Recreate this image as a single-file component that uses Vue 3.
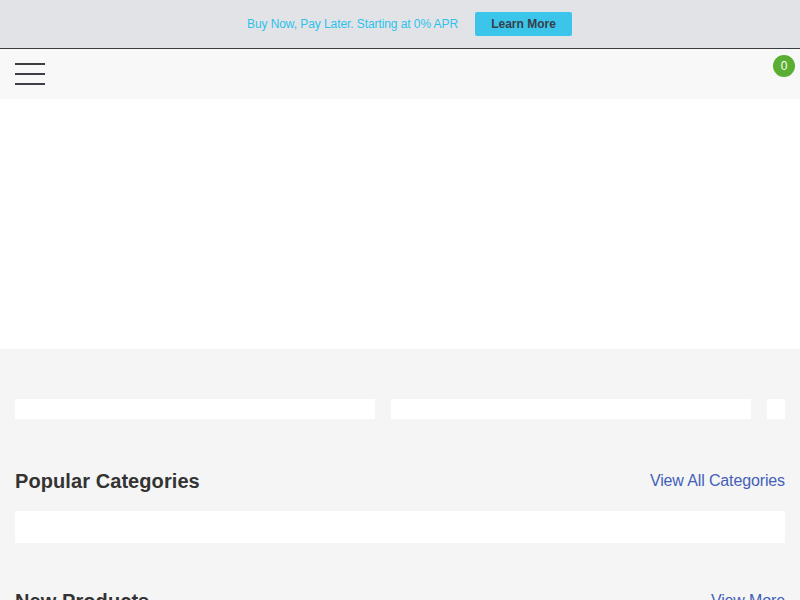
<script setup>
const slides = [
  { id: 1, cls: 'slide-full' },
  { id: 2, cls: 'slide-full' },
  { id: 3, cls: 'slide-peek' },
]
</script>

<template>
  <div class="page">
    <div class="promo">
      <span class="promo-text">Buy Now, Pay Later. Starting at 0% APR</span>
      <a class="promo-btn" href="#">Learn More</a>
    </div>
    <header class="nav">
      <button class="burger" aria-label="Menu">
        <span></span><span></span><span></span>
      </button>
      <span class="badge">0</span>
    </header>
    <div class="hero"></div>
    <main class="content">
      <div class="slides">
        <div v-for="s in slides" :key="s.id" :class="s.cls"></div>
      </div>
      <section class="head first">
        <h2>Popular Categories</h2>
        <a href="#" class="more">View All Categories</a>
      </section>
      <div class="strip"></div>
      <section class="head second">
        <h2>New Products</h2>
        <a href="#" class="more small">View More</a>
      </section>
    </main>
  </div>
</template>

<style>
html, body { margin: 0; background: #f4f4f4; }
</style>

<style scoped>
.page {
  height: 600px;
  overflow: hidden;
  font-family: "Liberation Sans", Arial, sans-serif;
  background: #f5f5f5;
}
.promo {
  height: 48px;
  border-bottom: 1px solid #3a3c42;
  background: #e2e3e7;
  display: flex;
  align-items: center;
  justify-content: center;
  gap: 17px;
  padding-left: 19px;
}
.promo-text {
  font-size: 12px;
  letter-spacing: -0.08px;
  color: #2cc2ea;
}
.promo-btn {
  width: 97px;
  height: 24px;
  display: flex;
  align-items: center;
  justify-content: center;
  background: #3bc5ea;
  border-radius: 2px;
  color: #36404b;
  font-size: 12px;
  font-weight: 700;
  text-decoration: none;
}
.nav {
  position: relative;
  height: 50px;
  background: #f8f8f8;
  display: flex;
  align-items: center;
  padding-left: 15px;
}
.burger {
  width: 30px;
  height: 22px;
  padding: 0;
  border: 0;
  background: none;
  display: flex;
  flex-direction: column;
  justify-content: space-between;
}
.burger span {
  display: block;
  height: 2px;
  background: #3d3f45;
}
.badge {
  position: absolute;
  top: 6px;
  right: 5px;
  width: 22px;
  height: 22px;
  border-radius: 50%;
  background: #5aae32;
  color: #fff;
  font-size: 12px;
  display: flex;
  align-items: center;
  justify-content: center;
}
.hero {
  height: 250px;
  background: #fff;
}
.content {
  padding: 50px 15px 0;
}
.slides {
  display: flex;
  gap: 16px;
  height: 20px;
}
.slide-full {
  width: 360px;
  background: #fff;
  flex: none;
}
.slide-peek {
  width: 18px;
  background: #fff;
  flex: none;
}
.head {
  display: flex;
  justify-content: space-between;
  align-items: center;
  height: 28px;
}
.head.first {
  margin-top: 48px;
}
.head.second {
  margin-top: 44px;
}
h2 {
  margin: 0;
  font-size: 20px;
  font-weight: 700;
  letter-spacing: 0.08px;
  color: #333333;
}
.more {
  font-size: 16px;
  letter-spacing: -0.13px;
  color: #4360b8;
  text-decoration: none;
}
.strip {
  height: 32px;
  margin-top: 16px;
  background: #fff;
}
</style>
